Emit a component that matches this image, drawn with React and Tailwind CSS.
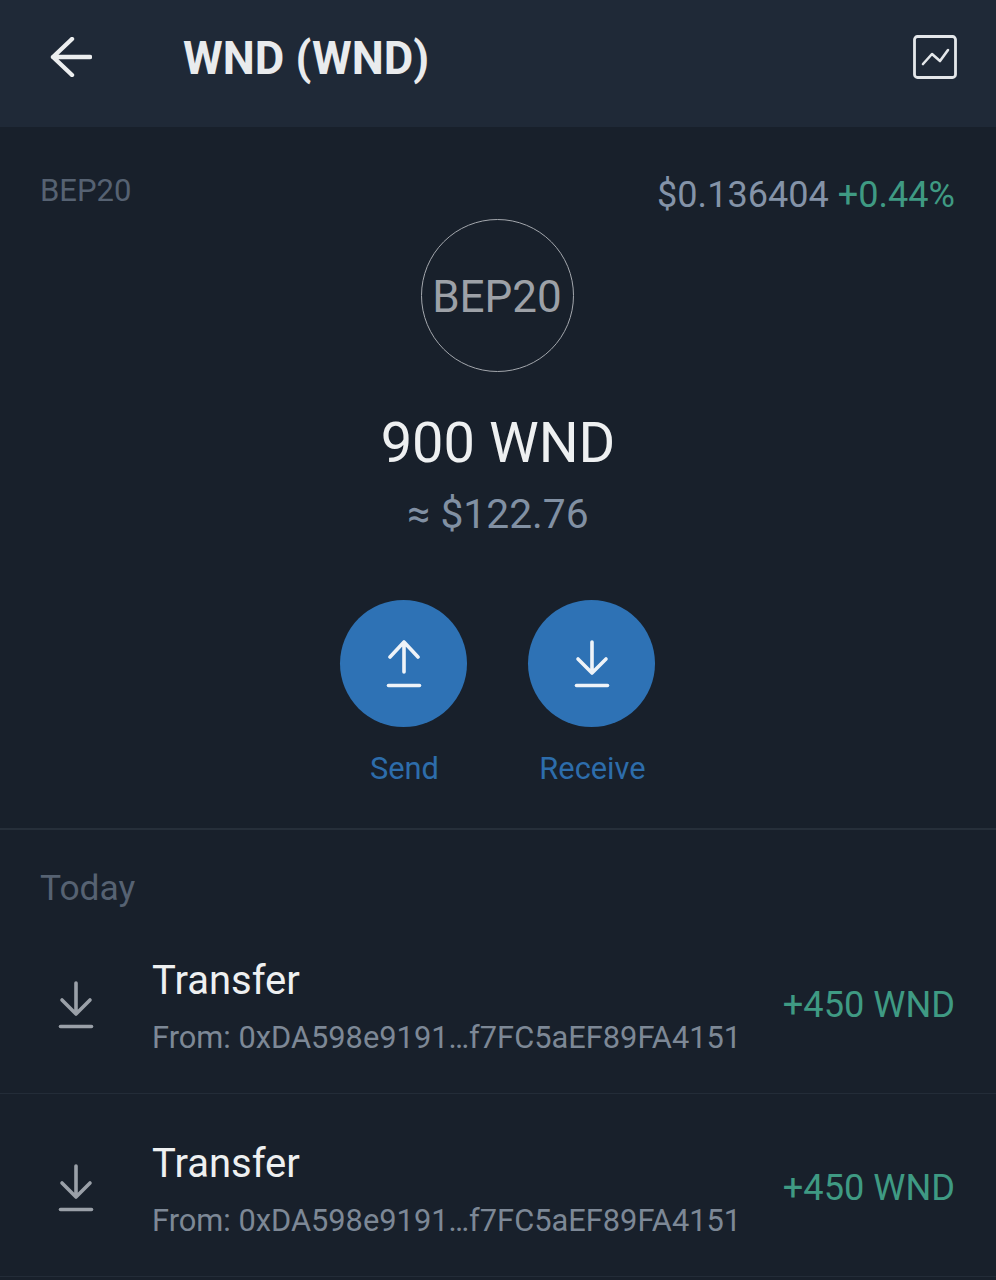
import React from "react";

function ArrowIcon({ up, color, className }) {
  return (
    <svg viewBox="0 0 36 48" className={className} fill="none" stroke={color} strokeWidth="3.6" strokeLinecap="round" strokeLinejoin="round">
      {up ? (
        <path d="M18 32V2M4 17L18 2L32 17" />
      ) : (
        <path d="M18 2V33M4 19L18 33L32 19" />
      )}
      <path d="M2.5 45.5H33.5" />
    </svg>
  );
}

function Tx() {
  return (
    <div className="flex items-center h-[183px] border-b-[1px] border-[#232c38] pt-[6px] pl-[58px] pr-[41px]">
      <ArrowIcon color="#9aa0a8" className="w-[36px] h-[48px] shrink-0" />
      <div className="ml-[58px] mt-[4px] flex-1 min-w-0 flex flex-col">
        <div className="text-[40px] leading-[46px] text-[#eef0f1]">Transfer</div>
        <div className="text-[30.8px] leading-[36px] mt-[16px] text-[#7d8896] whitespace-nowrap">From: 0xDA598e9191…f7FC5aEF89FA4151</div>
      </div>
      <div className="text-[36.2px] leading-[42px] text-[#3f9a83] whitespace-nowrap">+450 WND</div>
    </div>
  );
}

export default function App() {
  return (
    <div className="w-[996px] h-[1280px] overflow-hidden bg-[#18202b]" style={{ fontFamily: "Roboto, sans-serif" }}>
      <header className="h-[127px] bg-[#1f2937] flex items-center pb-[13px] pl-[50px] pr-[39px]">
        <svg viewBox="0 0 42 40" className="w-[42px] h-[40px] shrink-0" fill="none" stroke="#eceeef" strokeWidth="4.4" strokeLinecap="round" strokeLinejoin="round">
          <path d="M40 20H3M22 2L3 20L22 38" />
        </svg>
        <h1 className="ml-[91px] mt-[4px] flex-1 text-[45.4px] leading-[50px] font-bold text-[#e9ebed]">WND (WND)</h1>
        <svg viewBox="0 0 44 44" className="w-[44px] h-[44px] shrink-0" fill="none" stroke="#e4e7ea" strokeLinecap="round" strokeLinejoin="round">
          <rect x="1.5" y="1.5" width="41" height="41" rx="3" strokeWidth="2.8" />
          <path d="M10 29L19 19L27 26L35 15" strokeWidth="2.6" />
        </svg>
      </header>

      <section className="h-[703px] border-b-[2px] border-[#262f3a] flex flex-col items-center">
        <div className="w-full flex justify-between pl-[40px] pr-[41px] pt-[46px]">
          <span className="text-[31px] leading-[35px] text-[#566272]">BEP20</span>
          <span className="text-[36.1px] leading-[42px] whitespace-nowrap mt-[1px]">
            <span className="text-[#8493a8]">$0.136404</span> <span className="text-[#3f9a83]">+0.44%</span>
          </span>
        </div>
        <div className="w-[153px] h-[153px] rounded-full border border-[#a3a7ad] flex items-center justify-center mt-[3px] mr-[2px] pt-[3px] text-[44px] text-[#9da1a7]">BEP20</div>
        <div className="text-[56px] leading-[62px] mt-[40px] text-[#eef0f1]">900 WND</div>
        <div className="text-[40.8px] leading-[46px] mt-[17px] text-[#8190a3]">≈ $122.76</div>
        <div className="flex gap-[61px] mt-[63px] mr-[1px]">
          <div className="flex flex-col items-center w-[127px]">
            <div className="w-[127px] h-[127px] rounded-full bg-[#2e72b5] flex items-center justify-center">
              <ArrowIcon up color="#eef3f8" className="w-[36px] h-[48px]" />
            </div>
            <span className="text-[30.8px] leading-[34px] mt-[25px] ml-[2px] text-[#2d6dab]">Send</span>
          </div>
          <div className="flex flex-col items-center w-[127px]">
            <div className="w-[127px] h-[127px] rounded-full bg-[#2e72b5] flex items-center justify-center">
              <ArrowIcon color="#eef3f8" className="w-[36px] h-[48px]" />
            </div>
            <span className="text-[30.8px] leading-[34px] mt-[25px] ml-[2px] text-[#2d6dab] whitespace-nowrap">Receive</span>
          </div>
        </div>
      </section>

      <div className="h-[81px] text-[35.4px] leading-[42px] text-[#566272] pl-[40px] pt-[37px]">Today</div>
      <Tx />
      <Tx />
    </div>
  );
}
